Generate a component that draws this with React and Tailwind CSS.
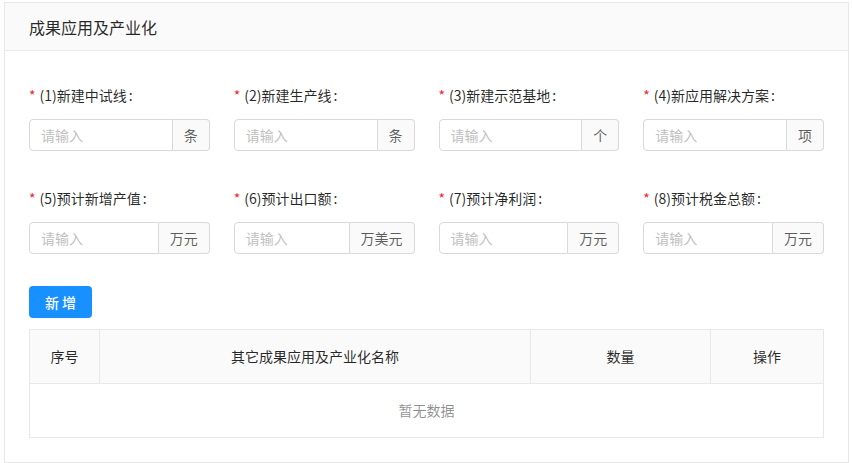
import React from "react";

const font = { fontFamily: '"Noto Sans CJK SC", "Noto Sans", sans-serif' };

const fields = [
  ["(1)新建中试线", "条"],
  ["(2)新建生产线", "条"],
  ["(3)新建示范基地", "个"],
  ["(4)新应用解决方案", "项"],
  ["(5)预计新增产值", "万元"],
  ["(6)预计出口额", "万美元"],
  ["(7)预计净利润", "万元"],
  ["(8)预计税金总额", "万元"],
];

function Field({ label, unit }) {
  return (
    <div className="flex flex-col">
      <div className="h-[22px] flex items-center text-[14px] leading-[22px] text-[rgba(0,0,0,0.85)]">
        <span className="text-[#f5222d] mr-[4px] text-[14px]">*</span>
        <span>{label}</span>
        <span className="ml-[2px]">:</span>
      </div>
      <div className="mt-[13px] flex h-[32px]">
        <div className="flex-1 min-w-0 border border-[#d9d9d9] rounded-l-[4px] bg-white flex items-center px-[11px] text-[14px] text-[#bfbfbf]">
          请输入
        </div>
        <div className="border border-l-0 border-[#d9d9d9] rounded-r-[4px] bg-[#fafafa] flex items-center px-[11px] text-[14px] text-[rgba(0,0,0,0.65)]">
          {unit}
        </div>
      </div>
    </div>
  );
}

export default function App() {
  return (
    <div className="w-[852px] h-[463px] bg-white pt-[2px] pl-[4px]" style={font}>
      <div className="w-[845px] h-[461px] border border-[#e8e8e8] bg-white flex flex-col">
        <div className="h-[48px] bg-[#fafafa] border-b border-[#e8e8e8] flex items-center px-[24px] text-[16px] text-[rgba(0,0,0,0.85)]">
          成果应用及产业化
        </div>
        <div className="px-[24px] pt-[33px]">
          <div className="grid grid-cols-4 gap-x-6 gap-y-[36px]">
            {fields.map(([l, u]) => (
              <Field key={l} label={l} unit={u} />
            ))}
          </div>
          <button className="mt-[32px] h-[32px] w-[63px] rounded-[4px] bg-[#1890ff] text-white text-[14px] font-medium flex items-center justify-center">
            新 增
          </button>
          <div className="mt-[11px] border border-[#e8e8e8] text-[14px]">
            <div className="flex h-[54px] bg-[#fafafa] border-b border-[#e8e8e8] text-[rgba(0,0,0,0.85)]">
              <div className="w-[70px] border-r border-[#e8e8e8] flex items-center justify-center">序号</div>
              <div className="w-[431px] border-r border-[#e8e8e8] flex items-center justify-center">其它成果应用及产业化名称</div>
              <div className="w-[180px] border-r border-[#e8e8e8] flex items-center justify-center">数量</div>
              <div className="flex-1 flex items-center justify-center">操作</div>
            </div>
            <div className="h-[53px] flex items-center justify-center text-[rgba(0,0,0,0.45)]">暂无数据</div>
          </div>
        </div>
      </div>
    </div>
  );
}
